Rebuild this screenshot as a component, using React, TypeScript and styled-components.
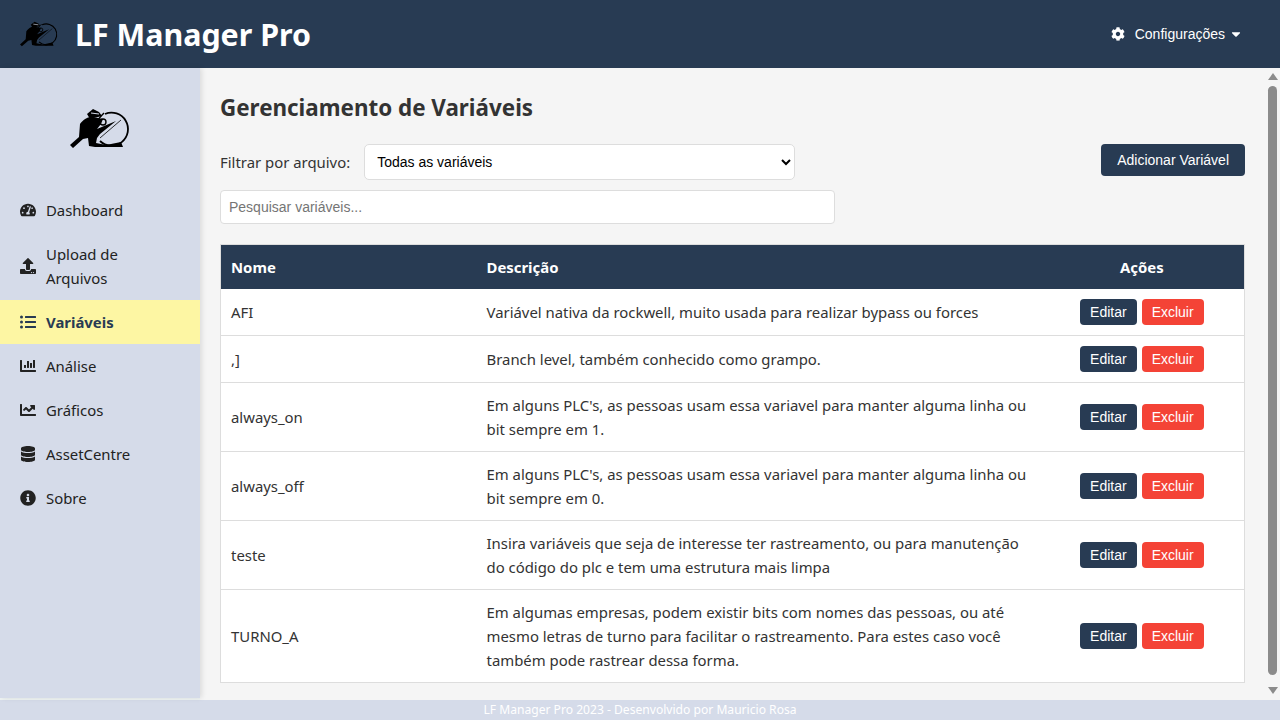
import React from "react";
import styled, { createGlobalStyle } from "styled-components";
import {
  FaCaretDown,
  FaChartBar,
  FaChartLine,
  FaCog,
  FaDatabase,
  FaInfoCircle,
  FaListUl,
  FaTachometerAlt,
  FaUpload,
} from "react-icons/fa";

const NAVY = "#283b53";
const SIDE = "#d5dbe9";
const UI_FONT = '"Noto Sans", "Open Sans", sans-serif';
const CONTROL_FONT = '"Liberation Sans", Arial, sans-serif';

const navItems = [
  { label: "Dashboard", icon: FaTachometerAlt },
  { label: "Upload de Arquivos", icon: FaUpload },
  { label: "Variáveis", icon: FaListUl, active: true },
  { label: "Análise", icon: FaChartBar },
  { label: "Gráficos", icon: FaChartLine },
  { label: "AssetCentre", icon: FaDatabase },
  { label: "Sobre", icon: FaInfoCircle },
];

const variables = [
  {
    name: "AFI",
    description:
      "Variável nativa da rockwell, muito usada para realizar bypass ou forces",
  },
  { name: ",]", description: "Branch level, também conhecido como grampo." },
  {
    name: "always_on",
    description:
      "Em alguns PLC's, as pessoas usam essa variavel para manter alguma linha ou bit sempre em 1.",
  },
  {
    name: "always_off",
    description:
      "Em alguns PLC's, as pessoas usam essa variavel para manter alguma linha ou bit sempre em 0.",
  },
  {
    name: "teste",
    description:
      "Insira variáveis que seja de interesse ter rastreamento, ou para manutenção do código do plc e tem uma estrutura mais limpa",
  },
  {
    name: "TURNO_A",
    description:
      "Em algumas empresas, podem existir bits com nomes das pessoas, ou até mesmo letras de turno para facilitar o rastreamento. Para estes caso você também pode rastrear dessa forma.",
  },
];

// hand drawn approximation of the app logo (figure pulling a wheel)
function Logo({ width }: { width: number }) {
  return (
    <svg width={width} viewBox="10 8 60 40" fill="none" aria-hidden="true">
      <path
        d="M45 14 A16.5 16.5 0 1 1 40 41"
        stroke="#000"
        strokeWidth="1.8"
      />
      <path d="M44 13 C40 17 38 19 37 22" stroke="#000" strokeWidth="1.4" />
      <path
        d="M10 45 L19 37 L20 24 C23 20 27 17 31 17 L38 18 L43 19 L41 24 L37 29 L56 21 L40 34 L37 38 L36 43 L46 45 L61 42 L63 47 L35 47 L29 46 L28 38 L23 39 L13 48 Z"
        fill="#000"
      />
      <path d="M27 14 L33 9 L39 12 L42 16 L30 19 Z" fill="#000" />
      <path d="M31 13 L39 14" stroke="#d5dbe9" strokeWidth="1" />
      <circle cx="43" cy="22" r="3" stroke="#000" strokeWidth="1.4" />
      <path d="M40 38 L61 20" stroke="#000" strokeWidth="0.8" />
    </svg>
  );
}

export default function App() {
  return (
    <>
      <GlobalStyle />
      <Page>
        <Header>
          <Brand>
            <Logo width={38} />
            <BrandTitle>LF Manager Pro</BrandTitle>
          </Brand>
          <SettingsToggle type="button">
            <FaCog size={14} />
            <SettingsLabel>Configurações</SettingsLabel>
            <FaCaretDown size={14} />
          </SettingsToggle>
        </Header>

        <Body>
          <Sidebar>
            <SidebarLogo>
              <Logo width={60} />
            </SidebarLogo>
            <Nav>
              {navItems.map(({ label, icon: Icon, active }) => (
                <NavItem key={label} $active={active}>
                  <NavIcon>
                    <Icon size={16} />
                  </NavIcon>
                  <span>{label}</span>
                </NavItem>
              ))}
            </Nav>
          </Sidebar>

          <Main>
            <Title>Gerenciamento de Variáveis</Title>
            <Toolbar>
              <FilterGroup>
                <FilterLabel htmlFor="file-filter">Filtrar por arquivo:</FilterLabel>
                <FilterSelect id="file-filter" defaultValue="all">
                  <option value="all">Todas as variáveis</option>
                </FilterSelect>
              </FilterGroup>
              <PrimaryButton type="button">Adicionar Variável</PrimaryButton>
            </Toolbar>
            <SearchInput type="text" placeholder="Pesquisar variáveis..." />

            <Table>
              <thead>
                <tr>
                  <HeadCell $width="25%">Nome</HeadCell>
                  <HeadCell $width="55%">Descrição</HeadCell>
                  <HeadCell $width="20%" $center>
                    Ações
                  </HeadCell>
                </tr>
              </thead>
              <tbody>
                {variables.map((item) => (
                  <tr key={item.name}>
                    <Cell>{item.name}</Cell>
                    <DescriptionCell>{item.description}</DescriptionCell>
                    <ActionCell>
                      <RowActions>
                        <RowButton type="button">Editar</RowButton>
                        <RowButton type="button" $danger>
                          Excluir
                        </RowButton>
                      </RowActions>
                    </ActionCell>
                  </tr>
                ))}
              </tbody>
            </Table>

            <FakeScrollbar aria-hidden="true">
              <ScrollArrow />
              <ScrollThumb />
              <ScrollArrow $down />
            </FakeScrollbar>
          </Main>
        </Body>

        <Footer>LF Manager Pro 2023 - Desenvolvido por Mauricio Rosa</Footer>
      </Page>
    </>
  );
}

const GlobalStyle = createGlobalStyle`
  * {
    box-sizing: border-box;
  }
  html,
  body {
    margin: 0;
    height: 100%;
    overflow: hidden;
  }
  body {
    font-family: ${UI_FONT};
    font-size: 14.9px;
    line-height: 24px;
    color: #333;
    background: #eef3f3;
  }
`;

const Page = styled.div`
  height: 720px;
  display: flex;
  flex-direction: column;
`;

const Header = styled.header`
  height: 68px;
  flex: none;
  background: ${NAVY};
  display: flex;
  align-items: center;
  justify-content: space-between;
  padding: 0 37px 0 20px;
`;

const Brand = styled.div`
  display: flex;
  align-items: center;
  gap: 17px;
`;

const BrandTitle = styled.h1`
  margin: 2px 0 0;
  color: #fff;
  font-size: 30.4px;
  line-height: 36px;
  font-weight: 700;
`;

const SettingsToggle = styled.button`
  display: flex;
  align-items: center;
  padding: 0;
  border: 0;
  background: none;
  color: #fff;
  font-family: ${CONTROL_FONT};
  font-size: 14px;
`;

const SettingsLabel = styled.span`
  margin: 0 4px 0 10px;
`;

const Body = styled.div`
  flex: 1;
  min-height: 0;
  display: flex;
`;

const Sidebar = styled.aside`
  width: 200px;
  flex: none;
  margin-bottom: 2px;
  background: ${SIDE};
  box-shadow: 2px 0 5px rgba(0, 0, 0, 0.1);
  position: relative;
  z-index: 1;
`;

const SidebarLogo = styled.div`
  height: 120px;
  display: flex;
  align-items: center;
  justify-content: center;
`;

const Nav = styled.nav`
  display: flex;
  flex-direction: column;
`;

const NavItem = styled.div<{ $active?: boolean }>`
  display: flex;
  align-items: center;
  gap: 10px;
  padding: 10px 20px;
  color: ${(props) => (props.$active ? NAVY : "#222")};
  font-weight: ${(props) => (props.$active ? 700 : 400)};
  background: ${(props) => (props.$active ? "#fdf6a3" : "transparent")};
`;

const NavIcon = styled.span`
  display: flex;
  flex: none;
`;

const Main = styled.main`
  flex: 1;
  min-width: 0;
  position: relative;
  overflow: hidden;
  background: #f5f5f5;
  padding: 22px 35px 0 20px;
`;

const Title = styled.h2`
  margin: 0 0 18px;
  height: 36px;
  font-size: 22.4px;
  line-height: 36px;
  font-weight: 700;
  color: #333;
`;

const Toolbar = styled.div`
  display: flex;
  align-items: flex-start;
  justify-content: space-between;
`;

const FilterGroup = styled.div`
  display: flex;
  align-items: center;
  gap: 14px;
`;

const FilterLabel = styled.label`
  color: #333;
`;

const FilterSelect = styled.select`
  width: 431px;
  height: 36px;
  padding: 0 8px;
  border: 1px solid #ddd;
  border-radius: 5px;
  background: #fff;
  color: #000;
  font-family: ${CONTROL_FONT};
  font-size: 14px;
`;

const PrimaryButton = styled.button`
  height: 32px;
  padding: 0 16px;
  border: 0;
  border-radius: 4px;
  background: ${NAVY};
  color: #fff;
  font-family: ${CONTROL_FONT};
  font-size: 14px;
`;

const SearchInput = styled.input`
  display: block;
  width: 615px;
  height: 34px;
  margin: 10px 0 20px;
  padding: 0 8px;
  border: 1px solid #ddd;
  border-radius: 4px;
  background: #fff;
  font-family: ${CONTROL_FONT};
  font-size: 14px;

  &::placeholder {
    color: #757575;
  }
`;

const Table = styled.table`
  width: 100%;
  border-collapse: collapse;
  table-layout: fixed;
  background: #fff;
  border: 1px solid #ddd;
`;

const HeadCell = styled.th<{ $width: string; $center?: boolean }>`
  width: ${(props) => props.$width};
  padding: 10px;
  background: ${NAVY};
  color: #fff;
  font-weight: 700;
  text-align: ${(props) => (props.$center ? "center" : "left")};
`;

const Cell = styled.td`
  padding: 10px;
  border-bottom: 1px solid #ddd;
  color: #333;
`;

const DescriptionCell = styled(Cell)`
  padding-right: 4px;
`;

const ActionCell = styled(Cell)`
  text-align: center;
`;

const RowActions = styled.div`
  display: flex;
  justify-content: center;
  gap: 5px;
`;

const RowButton = styled.button<{ $danger?: boolean }>`
  height: 26px;
  padding: 0 10px;
  border: 0;
  border-radius: 4px;
  background: ${(props) => (props.$danger ? "#f44336" : NAVY)};
  color: #fff;
  font-family: ${CONTROL_FONT};
  font-size: 14px;
`;

const FakeScrollbar = styled.div`
  position: absolute;
  top: 0;
  right: 0;
  bottom: 0;
  width: 15px;
  display: flex;
  flex-direction: column;
  align-items: center;
  gap: 6px;
  padding: 5px 0 6px;
  background: #f5f5f5;
`;

const ScrollArrow = styled.div<{ $down?: boolean }>`
  width: 0;
  height: 0;
  border-left: 5px solid transparent;
  border-right: 5px solid transparent;
  ${(props) =>
    props.$down
      ? "border-top: 7px solid #8b8b8b; margin-top: auto;"
      : "border-bottom: 7px solid #8b8b8b;"}
`;

const ScrollThumb = styled.div`
  width: 9px;
  height: 589px;
  border-radius: 5px;
  background: #8b8b8b;
`;

const Footer = styled.footer`
  height: 20px;
  flex: none;
  background: ${SIDE};
  color: #fff;
  font-family: ${UI_FONT};
  font-size: 12.1px;
  line-height: 20px;
  text-align: center;
`;
